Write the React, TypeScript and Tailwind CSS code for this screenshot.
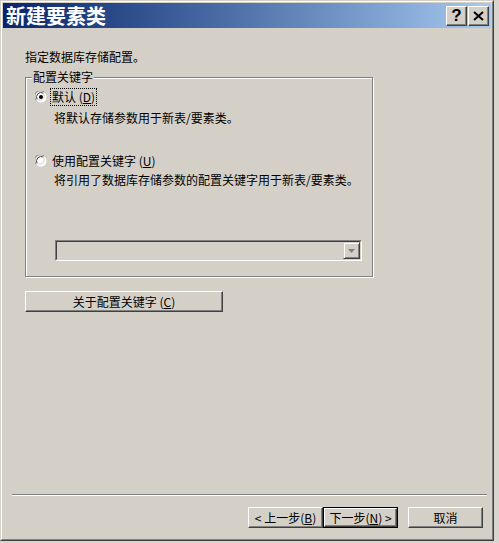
import React from "react";

const FONT = { fontFamily: '"Noto Sans CJK SC", "Noto Sans", sans-serif' };

function Key({ k }: { k: string }) {
  return (
    <span>
      (<span className="underline underline-offset-1">{k}</span>)
    </span>
  );
}

function Radio({ checked }: { checked?: boolean }) {
  return (
    <svg width="12" height="12" viewBox="0 0 12 12" className="shrink-0">
      <circle cx="6" cy="6" r="5.5" fill="#ffffff" />
      <path d="M1.2 9.2 A5.5 5.5 0 0 1 9.2 1.2" stroke="#808080" strokeWidth="1" fill="none" />
      <path d="M9.6 2.4 A5.5 5.5 0 0 1 2.4 9.6" stroke="#ffffff" strokeWidth="1" fill="none" />
      <path d="M2.2 8.4 A4.5 4.5 0 0 1 8.4 2.2" stroke="#404040" strokeWidth="1" fill="none" />
      <path d="M8.9 3.1 A4.5 4.5 0 0 1 3.1 8.9" stroke="#d4d0c8" strokeWidth="1" fill="none" />
      {checked && <circle cx="6" cy="6" r="2" fill="#000000" />}
    </svg>
  );
}

function Button({
  children,
  width,
  isDefault,
}: {
  children: React.ReactNode;
  width: string;
  isDefault?: boolean;
}) {
  if (isDefault) {
    return (
      <div className={`${width} h-[21px] border border-black`}>
        <div className="w-full h-full border-t border-l border-white border-r border-b border-r-[#404040] border-b-[#404040] shadow-[inset_-1px_-1px_0_#808080] flex items-center justify-center text-[12px] leading-none text-black whitespace-pre">
          {children}
        </div>
      </div>
    );
  }
  return (
    <div
      className={`${width} h-[21px] border-t border-l border-white border-r border-b border-r-[#404040] border-b-[#404040] shadow-[inset_-1px_-1px_0_#808080] flex items-center justify-center text-[12px] leading-none text-black whitespace-pre`}
    >
      {children}
    </div>
  );
}

export default function App() {
  return (
    <div className="w-[499px] h-[543px] bg-[#d8d5ce] overflow-hidden" style={FONT}>
      <div className="w-[494px] h-[541px] bg-[#d4d0c8] border-t border-l border-t-[#d4d0c8] border-l-[#d4d0c8] border-r border-b border-r-[#404040] border-b-[#404040] flex flex-col">
        <div className="flex-1 flex flex-col border-t border-l border-white border-r border-b border-r-[#808080] border-b-[#808080] p-[1px]">
          {/* title bar */}
          <div className="h-[25px] flex items-center bg-gradient-to-r from-[#0a246a] to-[#a6caf0] pl-[3px] pr-[2px]">
            <span className="text-white font-bold text-[20px] leading-none">新建要素类</span>
            <div className="ml-auto flex gap-[1px]">
              <div className="w-[21px] h-[20px] bg-[#d4d0c8] border-t border-l border-white border-r border-b border-r-[#404040] border-b-[#404040] shadow-[inset_-1px_-1px_0_#808080] flex items-center justify-center">
                <span className="text-black font-bold text-[17px] leading-none" style={{ fontFamily: '"Liberation Sans", sans-serif' }}>?</span>
              </div>
              <div className="w-[21px] h-[20px] bg-[#d4d0c8] border-t border-l border-white border-r border-b border-r-[#404040] border-b-[#404040] shadow-[inset_-1px_-1px_0_#808080] flex items-center justify-center">
                <svg width="11" height="10" viewBox="0 0 11 10">
                  <path d="M1 1 L10 9 M10 1 L1 9" stroke="#000" strokeWidth="2" />
                </svg>
              </div>
            </div>
          </div>

          {/* body */}
          <div className="flex-1 flex flex-col pl-[22px] text-black">
            <p className="mt-[22px] text-[12px] leading-[14px]">指定数据库存储配置。</p>

            <div className="relative mt-[13px] w-[348px] h-[200px] border border-[#808080] shadow-[inset_1px_1px_0_#ffffff,1px_1px_0_#ffffff]">
              <span className="absolute left-[6px] top-[-8px] bg-[#d4d0c8] px-[1px] text-[12px] leading-[14px]">配置关键字</span>

              <div className="flex flex-col pl-[9px] pt-[11px]">
                <div className="flex items-center gap-[4px]">
                  <Radio checked />
                  <span className="text-[12px] leading-[14px] outline outline-1 outline-dotted outline-black px-[1px] py-[1px]">
                    默认 <Key k="D" />
                  </span>
                </div>
                <p className="mt-[6px] ml-[19px] text-[12px] leading-[14px]">将默认存储参数用于新表/要素类。</p>

                <div className="mt-[28px] flex items-center gap-[4px]">
                  <Radio />
                  <span className="text-[12px] leading-[14px] px-[1px] py-[1px]">
                    使用配置关键字 <Key k="U" />
                  </span>
                </div>
                <p className="mt-[4px] ml-[19px] text-[12px] leading-[14px]">将引用了数据库存储参数的配置关键字用于新表/要素类。</p>

                <div className="mt-[53px] ml-[20px] w-[307px] h-[21px] border-t border-l border-[#808080] border-r border-b border-r-white border-b-white">
                  <div className="w-full h-full border-t border-l border-[#404040] border-r border-b border-r-[#d4d0c8] border-b-[#d4d0c8] flex justify-end">
                    <div className="w-[17px] h-[17px] border-t border-l border-[#d4d0c8] border-r border-b border-r-[#404040] border-b-[#404040] shadow-[inset_1px_1px_0_#ffffff,inset_-1px_-1px_0_#808080] flex items-center justify-center">
                      <svg width="7" height="4" viewBox="0 0 7 4">
                        <path d="M0 0 H7 L3.5 4 Z" fill="#808080" />
                      </svg>
                    </div>
                  </div>
                </div>
              </div>
            </div>

            <div className="mt-[14px]">
              <Button width="w-[198px]">
                关于配置关键字 <Key k="C" />
              </Button>
            </div>

            <div className="mt-auto -ml-[13px] w-[475px] h-[2px] border-t border-[#808080] border-b border-b-white" />

            <div className="mt-[11px] mb-[10px] flex pl-[223px]">
              <Button width="w-[75px]">
                {"< 上一步"}<Key k="B" />
              </Button>
              <Button width="w-[75px]" isDefault>
                {"下一步"}<Key k="N" />{" >"}
              </Button>
              <div className="ml-[10px]">
                <Button width="w-[75px]">取消</Button>
              </div>
            </div>
          </div>
        </div>
      </div>
    </div>
  );
}
